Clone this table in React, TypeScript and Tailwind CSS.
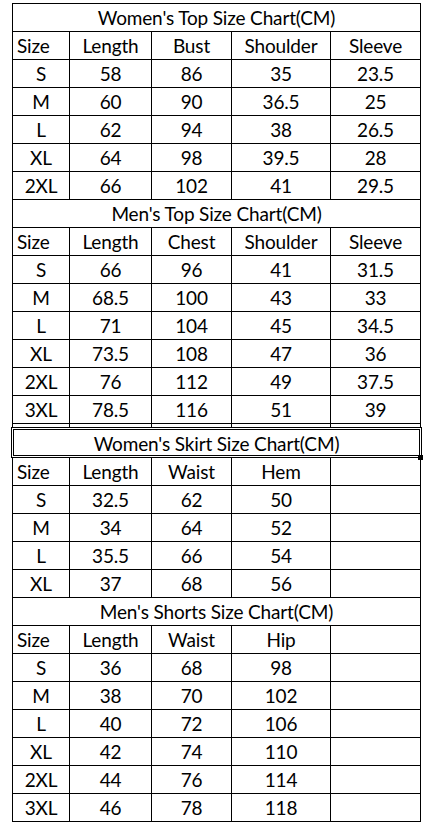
import React from "react";

type Section = {
  title: string;
  header: string[];
  rows: string[][];
  selected?: boolean;
};

const sections: Section[] = [
  {
    title: "Women's Top Size Chart(CM)",
    header: ["Size", "Length", "Bust", "Shoulder", "Sleeve"],
    rows: [
      ["S", "58", "86", "35", "23.5"],
      ["M", "60", "90", "36.5", "25"],
      ["L", "62", "94", "38", "26.5"],
      ["XL", "64", "98", "39.5", "28"],
      ["2XL", "66", "102", "41", "29.5"],
    ],
  },
  {
    title: "Men's Top Size Chart(CM)",
    header: ["Size", "Length", "Chest", "Shoulder", "Sleeve"],
    rows: [
      ["S", "66", "96", "41", "31.5"],
      ["M", "68.5", "100", "43", "33"],
      ["L", "71", "104", "45", "34.5"],
      ["XL", "73.5", "108", "47", "36"],
      ["2XL", "76", "112", "49", "37.5"],
      ["3XL", "78.5", "116", "51", "39"],
    ],
  },
  {
    title: "Women's Skirt Size Chart(CM)",
    header: ["Size", "Length", "Waist", "Hem", ""],
    rows: [
      ["S", "32.5", "62", "50", ""],
      ["M", "34", "64", "52", ""],
      ["L", "35.5", "66", "54", ""],
      ["XL", "37", "68", "56", ""],
    ],
    selected: true,
  },
  {
    title: "Men's Shorts Size Chart(CM)",
    header: ["Size", "Length", "Waist", "Hip", ""],
    rows: [
      ["S", "36", "68", "98", ""],
      ["M", "38", "70", "102", ""],
      ["L", "40", "72", "106", ""],
      ["XL", "42", "74", "110", ""],
      ["2XL", "44", "76", "114", ""],
      ["3XL", "46", "78", "118", ""],
    ],
  },
];

const cols = "grid grid-cols-[57px_82px_80px_99px_90px] border-l border-black";

function Row({ cells, header }: { cells: string[]; header?: boolean }) {
  return (
    <div className={cols}>
      {cells.map((c, i) => (
        <div
          key={i}
          className={`h-[28px] border-r border-b border-black flex items-end pb-[4px] leading-none ${
            header && i === 0 ? "justify-start pl-[4px]" : "justify-center"
          }`}
        >
          {c}
        </div>
      ))}
    </div>
  );
}

export default function App() {
  return (
    <div className="min-h-screen bg-white text-black text-[19px] tracking-[-0.15px] font-['Lato',sans-serif] pt-[3px] pl-[12px]">
      <div className="w-[409px] border-t border-black">
        {sections.map((s) => (
          <div key={s.title}>
            {s.selected ? (
              <>
                {/* thin strip under the 3XL row, then the selected (double border) title cell */}
                <div className={cols}>
                  {[0, 1, 2, 3, 4].map((i) => (
                    <div key={i} className="h-[3px] border-r border-black" />
                  ))}
                </div>
                <div className="relative -mx-px h-[31px] border-[3px] border-double border-black flex items-end justify-center pb-[2px] leading-none">
                  {s.title}
                  <span className="absolute -right-[4px] -bottom-[5px] w-[5px] h-[5px] bg-black" />
                </div>
              </>
            ) : (
              <div className="h-[28px] border-l border-r border-b border-black flex items-end justify-center pb-[4px] leading-none">
                {s.title}
              </div>
            )}
            <Row cells={s.header} header />
            {s.rows.map((r) => (
              <Row key={r[0]} cells={r} />
            ))}
          </div>
        ))}
      </div>
    </div>
  );
}
